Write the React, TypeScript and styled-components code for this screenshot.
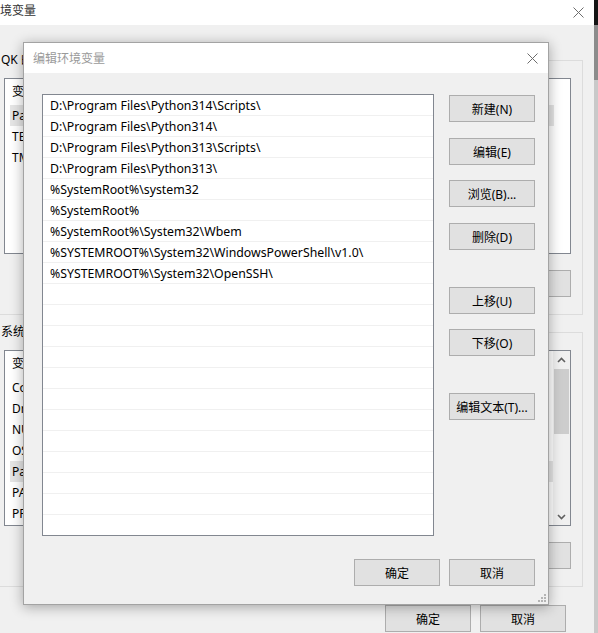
import React from "react";
import styled, { createGlobalStyle } from "styled-components";

const GlobalStyle = createGlobalStyle`
  html, body {
    margin: 0;
    padding: 0;
  }
  body {
    font-family: "Noto Sans", "Noto Sans CJK SC", sans-serif;
    font-size: 12px;
    color: #000;
  }
`;

const pathEntries = [
  "D:\\Program Files\\Python314\\Scripts\\",
  "D:\\Program Files\\Python314\\",
  "D:\\Program Files\\Python313\\Scripts\\",
  "D:\\Program Files\\Python313\\",
  "%SystemRoot%\\system32",
  "%SystemRoot%",
  "%SystemRoot%\\System32\\Wbem",
  "%SYSTEMROOT%\\System32\\WindowsPowerShell\\v1.0\\",
  "%SYSTEMROOT%\\System32\\OpenSSH\\",
];

const PATH_ROWS = 21;

const userVars = ["Path", "TEMP", "TMP"];
const systemVars = [
  "ComSpec",
  "DriverData",
  "NUMBER_OF_PROCESSORS",
  "OS",
  "Path",
  "PATHEXT",
  "PROCESSOR_ARCHITECTURE",
];

const CloseIcon = () => (
  <svg width="11" height="11" viewBox="0 0 11 11">
    <path d="M0.5 0.5 L10.5 10.5 M10.5 0.5 L0.5 10.5" stroke="#6d6d6d" strokeWidth="1" fill="none" />
  </svg>
);

const Chevron = ({ up }: { up?: boolean }) => (
  <svg width="9" height="6" viewBox="0 0 9 6">
    <path
      d={up ? "M1 5 L4.5 1.5 L8 5" : "M1 1 L4.5 4.5 L8 1"}
      stroke="#606060"
      strokeWidth="1.6"
      fill="none"
    />
  </svg>
);

const Grip = () => (
  <svg width="8" height="8" viewBox="0 0 8 8">
    <g fill="#b4b4b4">
      <rect x="6" y="0" width="2" height="2" />
      <rect x="3" y="3" width="2" height="2" />
      <rect x="6" y="3" width="2" height="2" />
      <rect x="0" y="6" width="2" height="2" />
      <rect x="3" y="6" width="2" height="2" />
      <rect x="6" y="6" width="2" height="2" />
    </g>
  </svg>
);

type VarListProps = { names: string[]; selected: string; scroll?: boolean };

const VariableList = ({ names, selected, scroll }: VarListProps) => (
  <VarList>
    <VarColumn>
      <VarHeader>变量</VarHeader>
      {names.map((n) => (
        <VarRow key={n} $selected={n === selected}>
          {n}
        </VarRow>
      ))}
    </VarColumn>
    {scroll && (
      <Scrollbar>
        <ScrollArrow>
          <Chevron up />
        </ScrollArrow>
        <ScrollThumb />
        <ScrollTrack />
        <ScrollArrow>
          <Chevron />
        </ScrollArrow>
      </Scrollbar>
    )}
  </VarList>
);

const App = () => {
  const rows = Array.from({ length: PATH_ROWS }, (_, i) => pathEntries[i] ?? "");

  return (
    <Desktop>
      <GlobalStyle />

      <BgWindow>
        <BgTitleBar>
          <BgTitle>环境变量</BgTitle>
          <CloseBox>
            <CloseIcon />
          </CloseBox>
        </BgTitleBar>
        <BgBody>
          <GroupBox>
            <GroupLabel>QK 的用户变量(U)</GroupLabel>
            <VariableList names={userVars} selected="Path" />
            <ButtonRow>
              <WinButton>新建(N)...</WinButton>
              <WinButton>编辑(E)...</WinButton>
              <WinButton>删除(D)</WinButton>
            </ButtonRow>
          </GroupBox>
          <GroupBox $spaced>
            <GroupLabel>系统变量(S)</GroupLabel>
            <VariableList names={systemVars} selected="Path" scroll />
            <ButtonRow>
              <WinButton>新建(W)...</WinButton>
              <WinButton>编辑(I)...</WinButton>
              <WinButton>删除(L)</WinButton>
            </ButtonRow>
          </GroupBox>
          <BgFooter>
            <WinButton>确定</WinButton>
            <WinButton>取消</WinButton>
          </BgFooter>
        </BgBody>
      </BgWindow>

      <Dialog>
        <DialogTitleBar>
          <DialogTitle>编辑环境变量</DialogTitle>
          <CloseBox>
            <CloseIcon />
          </CloseBox>
        </DialogTitleBar>
        <DialogBody>
          <DialogMain>
            <PathList>
              {rows.map((p, i) => (
                <PathRow key={i}>{p}</PathRow>
              ))}
            </PathList>
            <SideButtons>
              <WinButton $gap={1}>新建(N)</WinButton>
              <WinButton $gap={16}>编辑(E)</WinButton>
              <WinButton $gap={15}>浏览(B)...</WinButton>
              <WinButton $gap={16}>删除(D)</WinButton>
              <WinButton $gap={37}>上移(U)</WinButton>
              <WinButton $gap={15}>下移(O)</WinButton>
              <WinButton $gap={37}>编辑文本(T)...</WinButton>
            </SideButtons>
          </DialogMain>
          <DialogFooter>
            <WinButton>确定</WinButton>
            <WinButton>取消</WinButton>
          </DialogFooter>
        </DialogBody>
        <ResizeGrip>
          <Grip />
        </ResizeGrip>
      </Dialog>
    </Desktop>
  );
};

export default App;

const Desktop = styled.div`
  position: relative;
  width: 598px;
  height: 633px;
  overflow: hidden;
  background: linear-gradient(
    to bottom,
    #151515 0,
    #151515 25px,
    #8c8c8c 25px,
    #8c8c8c 80px,
    #c9c9c9 80px
  );
`;

/* windows on the desktop are placed by their own coordinates */
const BgWindow = styled.div`
  position: absolute;
  left: -22px;
  top: 0;
  width: 616px;
  height: 660px;
  display: flex;
  flex-direction: column;
  background: #f0f0f0;
`;

const BgTitleBar = styled.div`
  height: 25px;
  flex: none;
  display: flex;
  align-items: center;
  justify-content: space-between;
  background: #fff;
  padding-left: 10px;
`;

const BgTitle = styled.span`
  font-size: 12px;
  color: #333;
  margin-top: -5px;
`;

const CloseBox = styled.div`
  width: 29px;
  height: 100%;
  display: flex;
  align-items: center;
  justify-content: center;
  margin-right: 1px;
`;

const BgBody = styled.div`
  display: flex;
  flex-direction: column;
  padding: 27px 11px 0 12px;
`;

const GroupBox = styled.fieldset<{ $spaced?: boolean }>`
  margin: ${(p) => (p.$spaced ? "9px" : "0")} 0 0 0;
  min-width: 0;
  border: 1px solid #dcdcdc;
  padding: 10px 11px 17px 13px;
  display: flex;
  flex-direction: column;
  gap: 16px;
`;

const GroupLabel = styled.legend`
  font-size: 12px;
  line-height: 16px;
  padding: 0 2px;
  margin-left: -5px;
`;

const VarList = styled.div`
  height: 176px;
  box-sizing: border-box;
  border: 1px solid #828790;
  background: #fff;
  display: flex;
  overflow: hidden;
`;

const VarColumn = styled.div`
  flex: 1;
  min-width: 0;
  padding-right: 16px;
`;

const VarHeader = styled.div`
  height: 26px;
  line-height: 26px;
  padding-left: 7px;
`;

const VarRow = styled.div<{ $selected?: boolean }>`
  height: 21px;
  line-height: 21px;
  margin-left: 5px;
  padding-left: 2px;
  white-space: nowrap;
  background: ${(p) => (p.$selected ? "#e5e5e5" : "transparent")};
`;

const Scrollbar = styled.div`
  width: 17px;
  flex: none;
  display: flex;
  flex-direction: column;
  align-items: center;
  background: #f0f0f0;
  margin-left: -16px;
`;

const ScrollArrow = styled.div`
  height: 17px;
  width: 100%;
  display: flex;
  align-items: center;
  justify-content: center;
`;

const ScrollThumb = styled.div`
  width: 15px;
  height: 65px;
  margin-top: 1px;
  background: #cdcdcd;
`;

const ScrollTrack = styled.div`
  flex: 1;
`;

const ButtonRow = styled.div`
  display: flex;
  justify-content: flex-end;
  gap: 9px;
`;

const BgFooter = styled.div`
  display: flex;
  justify-content: flex-end;
  gap: 9px;
  padding-right: 17px;
  margin-top: 18px;
`;

const WinButton = styled.button<{ $gap?: number }>`
  width: 86px;
  height: 27px;
  flex: none;
  box-sizing: border-box;
  margin: ${(p) => p.$gap ?? 0}px 0 0 0;
  padding: 0;
  background: #e1e1e1;
  border: 1px solid #adadad;
  border-radius: 0;
  font-family: "Noto Sans", "Noto Sans CJK SC", sans-serif;
  font-size: 12px;
  color: #000;
  white-space: nowrap;
`;

const Dialog = styled.div`
  position: absolute;
  left: 23px;
  top: 42px;
  width: 526px;
  height: 563px;
  box-sizing: border-box;
  border: 1px solid #a3a3a3;
  background: #f0f0f0;
  display: flex;
  flex-direction: column;
  box-shadow: 0 2px 12px rgba(0, 0, 0, 0.32);
`;

const DialogTitleBar = styled.div`
  height: 30px;
  flex: none;
  display: flex;
  align-items: center;
  justify-content: space-between;
  background: #fff;
  padding-left: 9px;
`;

const DialogTitle = styled.span`
  font-size: 12px;
  color: #9a9a9a;
`;

const DialogBody = styled.div`
  flex: 1;
  display: flex;
  flex-direction: column;
  padding: 21px 13px 0 18px;
`;

const DialogMain = styled.div`
  display: flex;
  gap: 15px;
`;

const PathList = styled.div`
  width: 392px;
  height: 442px;
  box-sizing: border-box;
  border: 1px solid #828790;
  background: #fff;
  overflow: hidden;
`;

const PathRow = styled.div`
  height: 21px;
  box-sizing: border-box;
  border-bottom: 1px solid #f0f0f0;
  padding-left: 7px;
  font-size: 12.3px;
  line-height: 22px;
  white-space: nowrap;
`;

const SideButtons = styled.div`
  display: flex;
  flex-direction: column;
`;

const DialogFooter = styled.div`
  display: flex;
  justify-content: flex-end;
  gap: 9px;
  margin-top: 23px;
`;

const ResizeGrip = styled.div`
  position: absolute;
  right: 2px;
  bottom: 2px;
  width: 8px;
  height: 8px;
  line-height: 0;
`;
